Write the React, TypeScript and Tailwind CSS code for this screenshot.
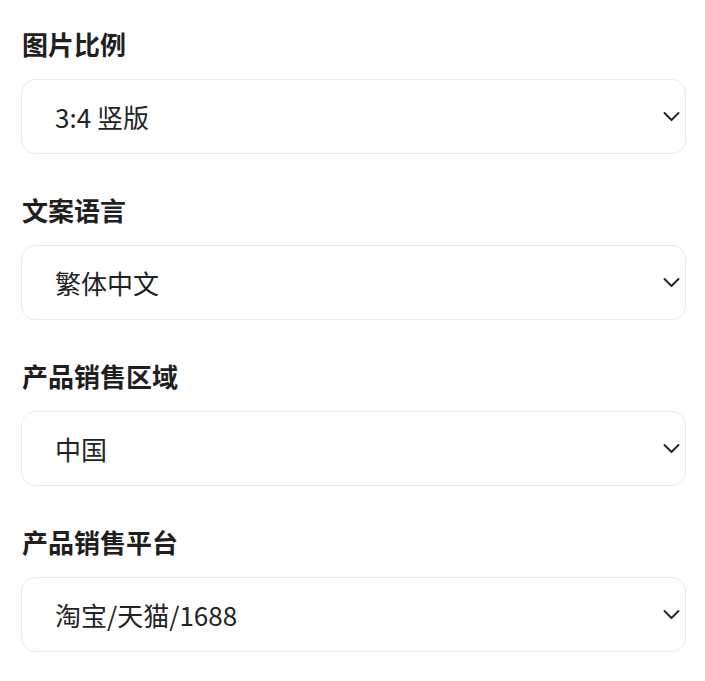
import React, { useState } from "react";

interface Field {
  key: string;
  label: string;
  options: string[];
  initial: string;
}

const fields: Field[] = [
  { key: "ratio", label: "图片比例", options: ["1:1 方形", "3:4 竖版", "4:3 横版", "9:16 竖版", "16:9 横版"], initial: "3:4 竖版" },
  { key: "lang", label: "文案语言", options: ["简体中文", "繁体中文", "English", "日本語"], initial: "繁体中文" },
  { key: "region", label: "产品销售区域", options: ["中国", "美国", "日本", "欧洲"], initial: "中国" },
  { key: "platform", label: "产品销售平台", options: ["淘宝/天猫/1688", "京东", "拼多多", "抖音"], initial: "淘宝/天猫/1688" },
];

const font = { fontFamily: '"Noto Sans CJK SC", "Noto Sans", sans-serif' };

export default function App() {
  const [values, setValues] = useState<Record<string, string>>(
    Object.fromEntries(fields.map((f) => [f.key, f.initial]))
  );

  return (
    <div className="min-h-screen bg-white pl-[21px] pr-[19px] pt-[27px]" style={font}>
      <div className="flex flex-col gap-[39px]">
        {fields.map((f) => (
          <div key={f.key}>
            <label className="block text-[26px] leading-[34px] font-bold text-[#1f1f1f] mb-[18px] pl-[1px]">
              {f.label}
            </label>
            <div className="relative">
              <select
                value={values[f.key]}
                onChange={(e) => setValues((prev) => ({ ...prev, [f.key]: e.target.value }))}
                className="w-full h-[75px] appearance-none bg-white border border-[#ebebeb] rounded-[14px] pl-[33px] pr-12 text-[26px] text-[#222] outline-none"
                style={font}
              >
                {f.options.map((o) => (
                  <option key={o} value={o}>
                    {o}
                  </option>
                ))}
              </select>
              <svg
                className="absolute right-[6px] top-1/2 -translate-y-1/2 pointer-events-none"
                width="17"
                height="17"
                viewBox="0 0 17 17"
                fill="none"
                stroke="#222"
                strokeWidth="1.9"
                strokeLinecap="round"
                strokeLinejoin="round"
              >
                <path d="M1.5 4.5 L8.5 11.5 L15.5 4.5" />
              </svg>
            </div>
          </div>
        ))}
      </div>
    </div>
  );
}
